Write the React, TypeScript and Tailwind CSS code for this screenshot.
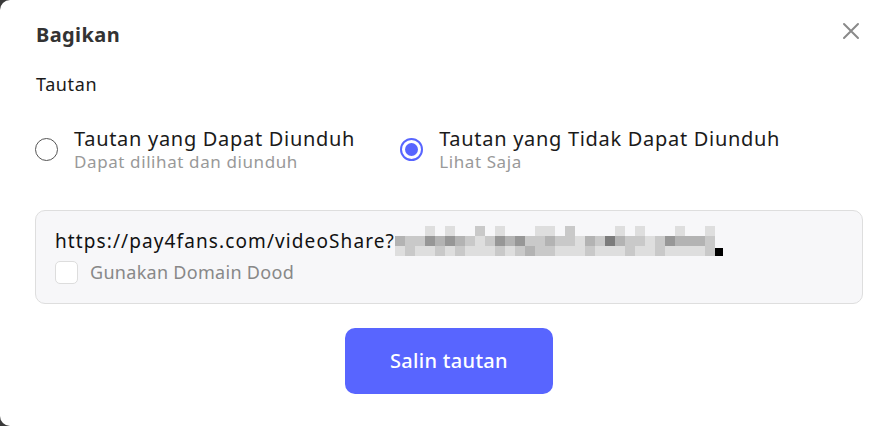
// pixelated part of the link (masked query string)
const TOP = "00010100201000110200001010001001";
const MID = "32243432124342232213253221243332";
const BOT = "12112121112123221112111211211112";
const GRAYS = ["#f7f7f9", "#dedede", "#c9c9c9", "#b3b3b3", "#979797", "#7c7c7c"];

const Pixels = () => (
  <span className="inline-flex flex-col">
    {[TOP, MID, BOT].map((row, r) => (
      <span key={r} className="flex">
        {row.split("").map((c, i) => (
          <span key={i} className="block w-[10px] h-[10px]" style={{ background: GRAYS[Number(c)] }} />
        ))}
      </span>
    ))}
  </span>
);

const Radio = ({ checked, title, sub }: { checked?: boolean; title: string; sub: string }) => (
  <label className="flex items-center gap-[16px]">
    <span
      className={
        checked
          ? "w-[23px] h-[23px] rounded-full border-2 border-[#5865ff] flex items-center justify-center"
          : "w-[23px] h-[23px] rounded-full border-[1.5px] border-[#555]"
      }
    >
      {checked && <span className="w-[13px] h-[13px] rounded-full bg-[#5865ff]" />}
    </span>
    <span className="flex flex-col">
      <span className="text-[20px] tracking-[0.7px] leading-[25px] text-[#1a1a1a]">{title}</span>
      <span className="text-[17px] tracking-[0.6px] leading-[22px] text-[#999]">{sub}</span>
    </span>
  </label>
);

export default function App() {
  return (
    <div className="w-[892px] h-[426px] overflow-hidden bg-[#3a3a3a] font-['Noto_Sans','Open_Sans',sans-serif]">
      <div className="w-[930px] h-[426px] bg-white rounded-[10px] pl-[36px] pt-[20px] flex flex-col">
        <div className="flex items-center justify-between w-[824px]">
          <h2 className="text-[20px] tracking-[0.4px] font-bold text-[#333] leading-[30px]">Bagikan</h2>
          <svg width="18" height="18" viewBox="0 0 18 18" className="-mt-[8px]">
            <path d="M2 2L16 16M16 2L2 16" stroke="#8a8a8a" strokeWidth="2" strokeLinecap="round" />
          </svg>
        </div>
        <div className="mt-[21px] text-[18px] tracking-[0.6px] text-[#1a1a1a] leading-[26px]">Tautan</div>
        <div className="mt-[29px] flex gap-[45px] -ml-[1px]">
          <Radio title="Tautan yang Dapat Diunduh" sub="Dapat dilihat dan diunduh" />
          <Radio checked title="Tautan yang Tidak Dapat Diunduh" sub="Lihat Saja" />
        </div>
        <div className="mt-[37px] -ml-[1px] w-[828px] h-[94px] rounded-[10px] border border-[#dedede] bg-[#f7f7f9] px-[19px] pt-[14px]">
          <div className="flex items-center text-[19px] tracking-[1.1px] text-[#111] leading-[32px] h-[32px]">
            <span>https://pay4fans.com/videoShare?</span>
            <Pixels />
            <span className="block w-[8px] h-[8px] bg-black self-end mb-[1px]" />
          </div>
          <div className="flex items-center gap-[12px] mt-[2px]">
            <span className="w-[23px] h-[23px] rounded-[5px] border border-[#ddd] bg-white" />
            <span className="text-[18px] tracking-[0.3px] text-[#888]">Gunakan Domain Dood</span>
          </div>
        </div>
        <div className="mt-[24px] w-[826px] flex justify-center">
          <button className="w-[208px] h-[66px] rounded-[10px] bg-[#5865ff] text-white text-[20px] tracking-[0.3px] font-medium">
            Salin tautan
          </button>
        </div>
      </div>
    </div>
  );
}
